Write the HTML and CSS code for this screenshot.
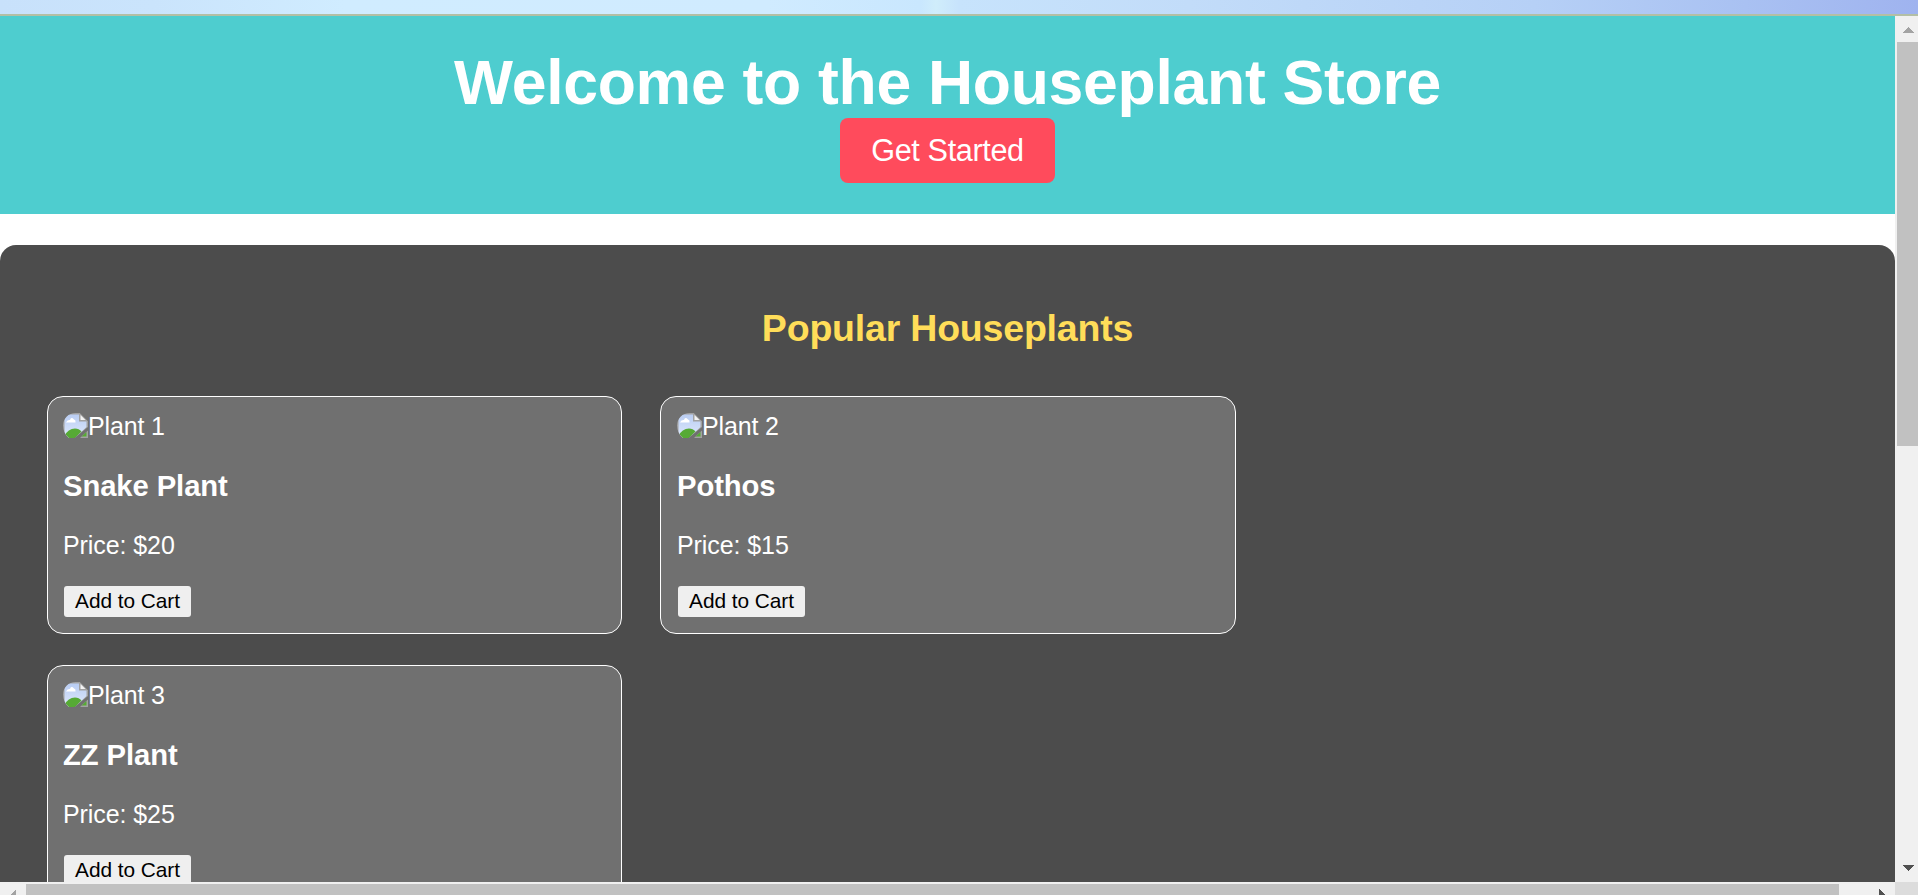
FILE: index.html
```html
<!DOCTYPE html>
<html lang="en">
<head>
<meta charset="utf-8">
<title>Houseplant Store</title>
<link rel="stylesheet" href="styles.css">
</head>
<body>
<svg width="0" height="0" class="defs">
  <defs>
    <linearGradient id="sky" x1="0" y1="0" x2="0" y2="1"><stop offset="0" stop-color="#b9cdf3"/><stop offset="1" stop-color="#dfe9fc"/></linearGradient>
    <clipPath id="round"><path d="M12.500 0H17L25 8V25H6Q0 20 0 12.500A12.500 12.500 0 0 1 12.500 0Z"/></clipPath>
    <symbol id="broken" viewBox="0 0 25 25">
      <g clip-path="url(#round)">
        <path d="M0 0H17L25 8V25H0Z" fill="#a2a2a2"/>
        <path d="M1.5 1.500H16V8.500H23.500V14L12 25H1.500Z" fill="url(#sky)"/>
        <path d="M3 9.500Q4 6.500 7 7Q8 3.500 11 6.500Q13 7 12.500 9.500Z" fill="#fff"/>
        <path d="M1.500 23Q5 15.500 12 15.500Q16 15.500 18.500 18.500L12 25H1.500Z" fill="#56aa35"/>
        <path d="M17.500 2L22.500 7H17.500Z" fill="#f4f4f4"/>
        <path d="M25 14V17.500L17 25H11.500Z" fill="#707070"/>
        <path d="M23.500 19V23.500H18.500Z" fill="#56aa35"/>
      </g>
    </symbol>
  </defs>
</svg>
<div class="window">
  <div class="chrome"></div>
  <div class="view">
    <main class="page">
      <header class="hero">
        <h1>Welcome to the Houseplant Store</h1>
        <a class="cta">Get Started</a>
      </header>
      <section class="popular">
        <h2>Popular Houseplants</h2>
        <div class="grid">
          <article class="card first">
            <div class="pic"><svg class="broken"><use href="#broken"/></svg><span>Plant 1</span></div>
            <h3>Snake Plant</h3>
            <p>Price: $20</p>
            <button>Add to Cart</button>
          </article>
          <article class="card">
            <div class="pic"><svg class="broken"><use href="#broken"/></svg><span>Plant 2</span></div>
            <h3>Pothos</h3>
            <p>Price: $15</p>
            <button>Add to Cart</button>
          </article>
          <article class="card first">
            <div class="pic"><svg class="broken"><use href="#broken"/></svg><span>Plant 3</span></div>
            <h3>ZZ Plant</h3>
            <p>Price: $25</p>
            <button>Add to Cart</button>
          </article>
        </div>
      </section>
    </main>
    <div class="vbar">
      <svg class="up" width="12" height="6" shape-rendering="crispEdges"><path d="M6 0L12 6H0Z" fill="#a3a3a3"/></svg>
      <div class="vthumb"></div>
      <svg class="down" width="12" height="6" shape-rendering="crispEdges"><path d="M0 0H12L6 6Z" fill="#505050"/></svg>
    </div>
    <div class="hbar">
      <svg class="left" width="6" height="12" shape-rendering="crispEdges"><path d="M6 0V12L0 6Z" fill="#a3a3a3"/></svg>
      <div class="hthumb"></div>
      <svg class="right" width="6" height="12" shape-rendering="crispEdges"><path d="M0 0V12L6 6Z" fill="#505050"/></svg>
    </div>
    <div class="corner"></div>
  </div>
</div>
</body>
</html>
```
FILE: styles.css
```css
* { box-sizing: border-box; }
body { margin: 0; background: #fff; font-family: Arial, "Liberation Sans", sans-serif; font-size: 25px; color: #fff; }
h1, h2, h3, p { margin: 0; }
.defs { position: absolute; }
.window { height: 895px; overflow: hidden; display: flex; flex-direction: column; }
.chrome {
  height: 16px;
  flex: none;
  border-bottom: 2px solid #b3bfa5;
  background: linear-gradient(90deg, #c8e1fb 0, #cae4fc 8%, #d0ecff 18%, #d0ebff 40%, #c9e7fe 48%, #d0edfb 48.800%, #c7e3fc 50%, #c2dcf9 62%, #b6d0f6 80%, #a9c1f2 91%, #9fb3ef 100%);
}
.view { flex: 1; min-height: 0; display: grid; grid-template-columns: 1895px 23px; grid-template-rows: 866px 13px; }
.page { overflow: hidden; background: #fff; }
.hero { height: 198px; padding-top: 31px; background: #4ecdcf; text-align: center; display: flex; flex-direction: column; align-items: center; }
h1 { font-size: 62.5px; line-height: 71px; letter-spacing: -0.28px; }
.cta { width: 215px; height: 65px; line-height: 65px; border-radius: 8px; background: #ff4b5c; font-size: 30.6px; letter-spacing: -0.35px; }
.popular { margin-top: 31px; height: 900px; padding: 62px 47px 0; border-radius: 16px 16px 0 0; background: #4c4c4c; }
h2 { font-size: 37.5px; line-height: 43px; letter-spacing: -0.2px; color: #ffdd59; text-align: center; }
.grid { margin-top: 46px; display: grid; grid-template-columns: 575px 576px; gap: 31px 38px; }
.card { height: 238px; border: 1px solid #fff; border-radius: 16px; background: #707070; padding: 16px; display: flex; flex-direction: column; align-items: flex-start; }
.card.first { padding-left: 15px; }
.pic { display: flex; height: 28px; line-height: 26px; letter-spacing: -0.15px; }
.broken { width: 25px; height: 25px; display: block; }
h3 { font-size: 29.25px; line-height: 34px; margin-top: 28px; letter-spacing: -0.1px; }
.card p { line-height: 28px; margin-top: 28px; letter-spacing: -0.08px; }
button { margin: 27px 0 0 1px; width: 127px; height: 31px; padding: 0 0 2px; border: 0; border-radius: 3px; background: #efefef; color: #000; font: 20.83px/28px Arial, "Liberation Sans", sans-serif; letter-spacing: -0.05px; }
.vbar { background: #f0f0f0; display: flex; flex-direction: column; padding: 11px 0 11px 2px; }
.up, .down { display: block; margin-left: 5px; flex: none; }
.vthumb { height: 404px; margin-top: 9px; background: #c1c1c1; }
.down { margin-top: auto; }
.hbar { background: #f0f0f0; display: flex; overflow: hidden; padding: 2px 10px 0 10px; }
.left, .right { display: block; margin-top: 5px; flex: none; }
.hthumb { width: 1813px; margin-left: 10px; background: #c1c1c1; }
.right { margin-left: auto; }
.corner { background: #dcdcdc; }
```
